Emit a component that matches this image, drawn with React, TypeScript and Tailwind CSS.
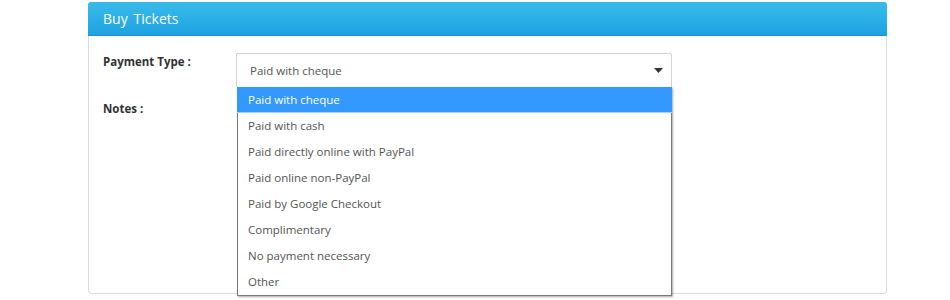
import React, { useState } from 'react';

const options = [
    'Paid with cheque',
    'Paid with cash',
    'Paid directly online with PayPal',
    'Paid online non-PayPal',
    'Paid by Google Checkout',
    'Complimentary',
    'No payment necessary',
    'Other',
];

export default function App() {
    const [selected] = useState(options[0]);

    return (
        <div className="w-[950px] h-[300px] bg-white overflow-hidden pt-[2px] font-['Open_Sans',sans-serif]">
            <div className="ml-[88px] w-[799px] h-[292px] border border-[#dcdcdc] border-t-0 rounded-[4px] flex flex-col">
                {/* Header */}
                <div className="h-[34px] rounded-t-[3px] bg-gradient-to-b from-[#39bbea] to-[#1ca2e1] border-b border-[#1892d8] -mx-px flex items-center pl-[15px]">
                    <span className="text-white text-[14px]">Buy&thinsp; Tickets</span>
                </div>

                {/* Body */}
                <div className="flex-1 pt-[17px] pl-[14px]">
                    <div className="flex">
                        <label className="w-[133px] text-[11.5px] font-bold text-[#333]">Payment Type :</label>
                        <div className="relative w-[436px]">
                            <div className="h-[35px] border border-[#d4d4d4] rounded-[2px] flex items-center justify-between pl-[13px] pr-[7px] bg-white">
                                <span className="text-[11.5px] text-[#555]">{selected}</span>
                                <svg width="9" height="5" viewBox="0 0 9 5" className="mr-[1px]">
                                    <path d="M0 0h9L4.5 5z" fill="#333" />
                                </svg>
                            </div>
                            {/* Open dropdown list */}
                            <div className="absolute left-[1px] top-[34px] w-[435px] bg-white border border-[#7a7a7a] border-t-0 shadow-[1px_1px_2px_rgba(0,0,0,0.35)] z-10">
                                {options.map((o, i) => (
                                    <div
                                        key={o}
                                        className={
                                            i === 0
                                                ? 'h-[26px] flex items-center text-[11.5px] bg-[#3399ff] text-white -mx-[1px] pl-[11px] border-b border-[#a8cff5]'
                                                : 'h-[26px] flex items-center pl-[10px] text-[11.5px] text-[#555]'
                                        }
                                    >
                                        {o}
                                    </div>
                                ))}
                            </div>
                        </div>
                    </div>
                    <div className="mt-[7px]">
                        <label className="text-[11.5px] font-bold text-[#333]">Notes :</label>
                    </div>
                </div>
            </div>
        </div>
    );
}
